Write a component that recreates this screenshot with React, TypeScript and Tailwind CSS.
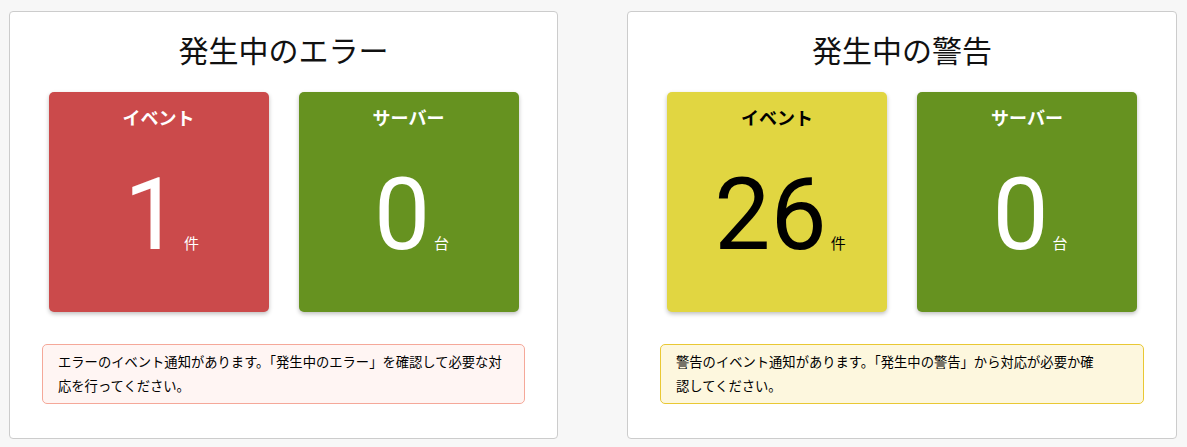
import React from 'react';

type Stat = {
  label: string;
  value: number;
  unit: string;
  tone: 'red' | 'green' | 'yellow';
};

type Panel = {
  title: string;
  stats: Stat[];
  alert: string[];
  alertTone: 'red' | 'yellow';
};

const PANELS: Panel[] = [
  {
    title: '発生中のエラー',
    stats: [
      { label: 'イベント', value: 1, unit: '件', tone: 'red' },
      { label: 'サーバー', value: 0, unit: '台', tone: 'green' },
    ],
    alert: ['エラーのイベント通知があります。「発生中のエラー」を確認して必要な対', '応を行ってください。'],
    alertTone: 'red',
  },
  {
    title: '発生中の警告',
    stats: [
      { label: 'イベント', value: 26, unit: '件', tone: 'yellow' },
      { label: 'サーバー', value: 0, unit: '台', tone: 'green' },
    ],
    alert: ['警告のイベント通知があります。「発生中の警告」から対応が必要か確', '認してください。'],
    alertTone: 'yellow',
  },
];

const TONE: Record<Stat['tone'], string> = {
  red: 'bg-[#cb4a4b] text-white',
  green: 'bg-[#669220] text-white',
  yellow: 'bg-[#e1d641] text-black',
};

const ALERT: Record<Panel['alertTone'], string> = {
  red: 'border-[#f5a899] bg-[#fff5f3]',
  yellow: 'border-[#e9c834] bg-[#fdf7de]',
};

function StatCard({ stat }: { stat: Stat }) {
  return (
    <div
      className={`flex h-[220px] w-[220px] flex-col items-center rounded-[5px] pt-[13px] shadow-[0_2px_4px_rgba(0,0,0,0.25)] ${TONE[stat.tone]}`}
    >
      <p className="text-[18px] font-bold leading-6">{stat.label}</p>
      <div className="mt-[36px] flex items-baseline pl-[6px]">
        <span className="font-['Roboto',sans-serif] text-[100px] font-normal leading-none">{stat.value}</span>
        <span className="ml-[4px] text-[15px] leading-none">{stat.unit}</span>
      </div>
    </div>
  );
}

function StatusPanel({ panel }: { panel: Panel }) {
  return (
    <section className="flex flex-col items-center rounded-[4px] border border-[#cccccc] bg-white pb-[34px] pt-[17px]">
      <h2 className="text-[30px] leading-[40px] text-[#111]">{panel.title}</h2>
      <div className="mt-[23px] flex gap-[30px]">
        {panel.stats.map((s) => (
          <StatCard key={s.label} stat={s} />
        ))}
      </div>
      <div
        className={`mt-[32px] w-[calc(100%-64px)] rounded-[5px] border px-[15px] py-[5px] text-[13.3px] leading-6 text-black ${ALERT[panel.alertTone]}`}
      >
        {panel.alert.map((line, i) => (
          <p key={i} className="whitespace-nowrap">
            {line}
          </p>
        ))}
      </div>
    </section>
  );
}

export default function App() {
  return (
    <div className="min-h-[447px] bg-[#f7f7f7] px-[9px] pt-[11px] font-['Noto_Sans_CJK_JP','Noto_Sans',sans-serif]">
      <div className="grid grid-cols-[549px_550px] gap-[69px]">
        {PANELS.map((p) => (
          <StatusPanel key={p.title} panel={p} />
        ))}
      </div>
    </div>
  );
}
